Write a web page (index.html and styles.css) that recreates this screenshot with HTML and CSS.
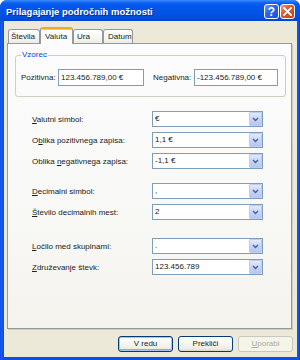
FILE: index.html
```html
<!DOCTYPE html>
<html>
<head>
<meta charset="utf-8">
<link rel="stylesheet" href="styles.css">
</head>
<body>
<div class="window">
  <div class="titlebar">
    <span class="title">Prilagajanje področnih možnosti</span>
    <div class="tb-buttons">
      <span class="tb-btn help">?</span>
      <span class="tb-btn close"><svg width="9" height="9" viewBox="0 0 9 9"><path d="M1 1 L8 8 M8 1 L1 8" stroke="#fff" stroke-width="1.8" stroke-linecap="square"/></svg></span>
    </div>
  </div>
  <div class="client">
    <div class="tabs">
      <span class="tab t1">Števila</span>
      <span class="tab t2 active">Valuta</span>
      <span class="tab t3">Ura</span>
      <span class="tab t4">Datum</span>
    </div>
    <div class="panel">
      <fieldset class="group">
        <legend>Vzorec</legend>
        <div class="sample">
          <span class="s-label pos">Pozitivna:</span>
          <span class="textbox tb-pos">123.456.789,00 €</span>
          <span class="s-label neg">Negativna:</span>
          <span class="textbox tb-neg">-123.456.789,00 €</span>
        </div>
      </fieldset>
      <div class="section s1">
        <div class="row"><span class="lbl"><u>V</u>alutni simbol:</span><div class="combo"><span class="val">€</span><span class="dd"><svg width="7" height="5" viewBox="0 0 7 5"><path d="M1 1 L3.5 3.5 L6 1" fill="none" stroke="#4D6185" stroke-width="1.4"/></svg></span></div></div>
        <div class="row"><span class="lbl">O<u>b</u>lika pozitivnega zapisa:</span><div class="combo"><span class="val">1,1 €</span><span class="dd"><svg width="7" height="5" viewBox="0 0 7 5"><path d="M1 1 L3.5 3.5 L6 1" fill="none" stroke="#4D6185" stroke-width="1.4"/></svg></span></div></div>
        <div class="row"><span class="lbl">Oblika <u>n</u>egativnega zapisa:</span><div class="combo"><span class="val">-1,1 €</span><span class="dd"><svg width="7" height="5" viewBox="0 0 7 5"><path d="M1 1 L3.5 3.5 L6 1" fill="none" stroke="#4D6185" stroke-width="1.4"/></svg></span></div></div>
      </div>
      <div class="section s2">
        <div class="row"><span class="lbl"><u>D</u>ecimalni simbol:</span><div class="combo"><span class="val">,</span><span class="dd"><svg width="7" height="5" viewBox="0 0 7 5"><path d="M1 1 L3.5 3.5 L6 1" fill="none" stroke="#4D6185" stroke-width="1.4"/></svg></span></div></div>
        <div class="row"><span class="lbl"><u>Š</u>tevilo decimalnih mest:</span><div class="combo"><span class="val">2</span><span class="dd"><svg width="7" height="5" viewBox="0 0 7 5"><path d="M1 1 L3.5 3.5 L6 1" fill="none" stroke="#4D6185" stroke-width="1.4"/></svg></span></div></div>
      </div>
      <div class="section s3">
        <div class="row"><span class="lbl"><u>L</u>očilo med skupinami:</span><div class="combo"><span class="val">.</span><span class="dd"><svg width="7" height="5" viewBox="0 0 7 5"><path d="M1 1 L3.5 3.5 L6 1" fill="none" stroke="#4D6185" stroke-width="1.4"/></svg></span></div></div>
        <div class="row"><span class="lbl"><u>Z</u>druževanje števk:</span><div class="combo"><span class="val">123.456.789</span><span class="dd"><svg width="7" height="5" viewBox="0 0 7 5"><path d="M1 1 L3.5 3.5 L6 1" fill="none" stroke="#4D6185" stroke-width="1.4"/></svg></span></div></div>
      </div>
    </div>
    <div class="buttons">
      <span class="btn default">V redu</span>
      <span class="btn">Prekliči</span>
      <span class="btn disabled"><u>U</u>porabi</span>
    </div>
  </div>
</div>
</body>
</html>
```

FILE: styles.css
```css
html, body {
  margin: 0;
  padding: 0;
  background: #ffffff;
}
body {
  font-family: "Liberation Sans", Arial, sans-serif;
  font-size: 8px;
  color: #222;
}
.window {
  width: 300px;
  height: 360px;
  box-sizing: border-box;
  display: flex;
  flex-direction: column;
  background: linear-gradient(90deg, #0842D8 0, #1662F0 1px, #0A50E4 3px, #0A50E4 297px, #1260EE 298px, #0735C6 300px);
  border-radius: 7px 7px 0 0;
  overflow: hidden;
}
.titlebar {
  height: 21px;
  flex: none;
  display: flex;
  align-items: center;
  justify-content: space-between;
  padding: 0 5px 0 6px;
  background: linear-gradient(180deg, #3D8EF9 0, #1A6BF6 2px, #0558EE 4px, #0456EA 9px, #0052E3 15px, #004CD9 19px, #0044CC 21px);
}
.title {
  color: #fff;
  font-weight: bold;
  font-size: 9.5px;
  text-shadow: 1px 1px 0 #0A2A9A;
  margin-top: 1px;
}
.tb-buttons {
  display: flex;
  gap: 1px;
  margin-top: 2px;
}
.tb-btn {
  width: 15px;
  height: 15px;
  box-sizing: border-box;
  border: 1px solid #fff;
  border-radius: 3px;
  display: flex;
  align-items: center;
  justify-content: center;
  color: #fff;
  font-weight: bold;
  font-size: 12px;
}
.help {
  background: linear-gradient(135deg, #6E9DF7 0, #2A62E8 45%, #1A4FD8 100%);
}
.close {
  background: linear-gradient(135deg, #F29A7C 0, #E0532A 45%, #C8401C 100%);
}
.client {
  flex: 1;
  margin: 0 3px 3px 4px;
  background: #ECE9D8;
  padding: 6px 4px 5px 3px;
  display: flex;
  flex-direction: column;
}
.tabs {
  display: flex;
  align-items: flex-end;
  height: 16px;
  padding-left: 1px;
}
.tab {
  box-sizing: border-box;
  height: 14px;
  border: 1px solid #919B9C;
  border-bottom: none;
  border-radius: 3px 3px 0 0;
  background: linear-gradient(180deg, #FFFFFF 0, #F6F5F1 60%, #ECEAE2 100%);
  padding-left: 2px;
  line-height: 13px;
  white-space: nowrap;
}
.t1 { width: 32px; }
.t2 { width: 33px; }
.t3 { width: 30px; padding-left: 3px; }
.t4 { width: 30px; padding-left: 4px; }
.tab.active {
  height: 17px;
  margin-bottom: -1px;
  position: relative;
  z-index: 1;
  background: #FCFCFE;
  border-top: 2px solid #F5A623;
  box-shadow: inset 0 1px 0 #FFC85A;
  padding-left: 4px;
  line-height: 15px;
}
.panel {
  flex: none;
  height: 286px;
  margin-right: 1px;
  box-sizing: border-box;
  border: 1px solid #919B9C;
  background: linear-gradient(180deg, #FCFCFE 0, #F8F8F5 60%, #F4F3EE 100%);
  box-shadow: 1px 1px 0 #D0CEBF;
  padding: 6px 5px 0 7px;
  display: flex;
  flex-direction: column;
}
.group {
  margin: 0;
  padding: 9px 6px 10px 5px;
  border: 1px solid #D0D0BF;
  border-radius: 3px;
  min-width: 0;
}
.group legend {
  color: #0046D5;
  padding: 0 1px;
  line-height: 10px;
}
.sample {
  display: flex;
  align-items: center;
}
.s-label {
  box-sizing: border-box;
  white-space: nowrap;
}
.pos { width: 37px; }
.neg { width: 50px; padding-left: 9px; }
.textbox {
  box-sizing: border-box;
  height: 17px;
  border: 1px solid #7F9DB9;
  background: #fff;
  padding-left: 2px;
  line-height: 15px;
  white-space: nowrap;
}
.tb-pos { width: 86px; }
.tb-neg { width: 84px; }
.section {
  display: flex;
  flex-direction: column;
  gap: 5px;
  margin-left: 17px;
}
.s1 { margin-top: 14px; }
.s2 { margin-top: 14px; }
.s3 { margin-top: 18px; }
.row {
  display: flex;
  align-items: center;
  height: 16px;
}
.lbl {
  width: 120px;
  white-space: nowrap;
}
.combo {
  box-sizing: border-box;
  width: 111px;
  height: 16px;
  border: 1px solid #7F9DB9;
  background: #fff;
  display: flex;
  align-items: stretch;
}
.val {
  flex: 1;
  padding-left: 2px;
  line-height: 14px;
  white-space: nowrap;
}
.dd {
  width: 13px;
  box-sizing: border-box;
  border: 1px solid #BCCDF5;
  border-radius: 1px;
  background: linear-gradient(180deg, #E2EAFE 0, #C6D5FA 50%, #B4C7F4 100%);
  display: flex;
  align-items: center;
  justify-content: center;
}
.buttons {
  display: flex;
  justify-content: flex-end;
  gap: 5px;
  margin-top: 7px;
}
.btn {
  box-sizing: border-box;
  width: 55px;
  height: 16px;
  border: 1px solid #003C74;
  border-radius: 3px;
  background: linear-gradient(180deg, #FFFFFF 0, #F6F5F0 50%, #ECEBE4 85%, #D8D4C8 100%);
  text-align: center;
  line-height: 14px;
}
.btn.default {
  box-shadow: inset 0 0 0 1px #A9C3EE, inset 0 -1px 0 1px #8AAEEA;
}
.btn.disabled {
  border-color: #C9C7BA;
  background: #F5F4EA;
  color: #ACA899;
}
```
